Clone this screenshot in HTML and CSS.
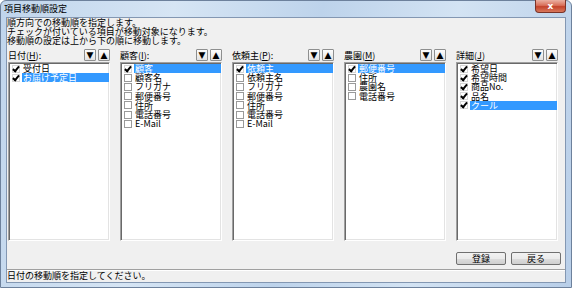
FILE: index.html
```html
<!DOCTYPE html>
<html lang="ja">
<head>
    <meta charset="UTF-8">
    <title>項目移動順設定</title>
    <link rel="stylesheet" href="styles.css">
</head>
<body>
<div class="window">
    <div class="titlebar">
        <span class="title">項目移動順設定</span>
        <span class="close">x</span>
    </div>
    <div class="client">
        <div class="intro">
            順方向での移動順を指定します。<br>
            チェックが付いている項目が移動対象になります。<br>
            移動順の設定は上から下の順に移動します。
        </div>

        <div class="columns">
            <div class="col">
                <div class="col-head">
                    <span class="label">日付(<u>H</u>):</span>
                    <span class="arrow">▼</span><span class="arrow">▲</span>
                </div>
                <ul class="list">
                    <li><span class="chk on"></span><span class="txt">受付日</span></li>
                    <li class="sel"><span class="chk on"></span><span class="txt">お届け予定日</span></li>
                </ul>
            </div>
            <div class="col">
                <div class="col-head">
                    <span class="label">顧客(<u>I</u>):</span>
                    <span class="arrow">▼</span><span class="arrow">▲</span>
                </div>
                <ul class="list">
                    <li class="sel"><span class="chk on"></span><span class="txt">顧客</span></li>
                    <li><span class="chk"></span><span class="txt">顧客名</span></li>
                    <li><span class="chk"></span><span class="txt">フリガナ</span></li>
                    <li><span class="chk"></span><span class="txt">郵便番号</span></li>
                    <li><span class="chk"></span><span class="txt">住所</span></li>
                    <li><span class="chk"></span><span class="txt">電話番号</span></li>
                    <li><span class="chk"></span><span class="txt">E-Mail</span></li>
                </ul>
            </div>
            <div class="col">
                <div class="col-head">
                    <span class="label">依頼主(<u>P</u>):</span>
                    <span class="arrow">▼</span><span class="arrow">▲</span>
                </div>
                <ul class="list">
                    <li class="sel"><span class="chk on"></span><span class="txt">依頼主</span></li>
                    <li><span class="chk"></span><span class="txt">依頼主名</span></li>
                    <li><span class="chk"></span><span class="txt">フリガナ</span></li>
                    <li><span class="chk"></span><span class="txt">郵便番号</span></li>
                    <li><span class="chk"></span><span class="txt">住所</span></li>
                    <li><span class="chk"></span><span class="txt">電話番号</span></li>
                    <li><span class="chk"></span><span class="txt">E-Mail</span></li>
                </ul>
            </div>
            <div class="col">
                <div class="col-head">
                    <span class="label">農園(<u>M</u>)</span>
                    <span class="arrow">▼</span><span class="arrow">▲</span>
                </div>
                <ul class="list">
                    <li class="sel"><span class="chk on"></span><span class="txt">郵便番号</span></li>
                    <li><span class="chk"></span><span class="txt">住所</span></li>
                    <li><span class="chk"></span><span class="txt">農園名</span></li>
                    <li><span class="chk"></span><span class="txt">電話番号</span></li>
                </ul>
            </div>
            <div class="col">
                <div class="col-head">
                    <span class="label">詳細(<u>J</u>)</span>
                    <span class="arrow">▼</span><span class="arrow">▲</span>
                </div>
                <ul class="list">
                    <li><span class="chk on"></span><span class="txt">希望日</span></li>
                    <li><span class="chk on"></span><span class="txt">希望時間</span></li>
                    <li><span class="chk on"></span><span class="txt">商品No.</span></li>
                    <li><span class="chk on"></span><span class="txt">品名</span></li>
                    <li class="sel"><span class="chk on"></span><span class="txt">クール</span></li>
                </ul>
            </div>
        </div>

        <div class="buttons">
            <button class="btn">登録</button>
            <button class="btn">戻る</button>
        </div>

        <div class="status">日付の移動順を指定してください。</div>
    </div>
</div>
</body>
</html>
```

FILE: styles.css
```css
html, body {
    margin: 0;
    padding: 0;
}
body {
    width: 572px;
    height: 288px;
    overflow: hidden;
    font-family: "Noto Sans CJK JP", "DejaVu Sans", sans-serif;
    font-size: 9px;
    color: #000;
}
.window {
    width: 572px;
    height: 288px;
    box-sizing: border-box;
    display: flex;
    flex-direction: column;
    background: linear-gradient(100deg, #c0d5ec 0%, #d6e5f4 28%, #bdd3eb 52%, #d3e3f3 74%, #b8cee8 100%);
    border: 1px solid #6d819c;
    border-radius: 6px 6px 0 0;
}
.titlebar {
    height: 16px;
    display: flex;
    justify-content: space-between;
    padding-left: 3px;
}
.title {
    line-height: 16px;
}
.close {
    width: 31px;
    height: 13px;
    margin-right: 5px;
    margin-top: -1px;
    box-sizing: border-box;
    border: 1px solid #7a3328;
    border-top: none;
    border-radius: 0 0 4px 4px;
    background: linear-gradient(#eab0a2 0%, #d9705a 45%, #c4432b 55%, #d8785c 100%);
    color: #fff;
    font-family: "DejaVu Sans", sans-serif;
    font-weight: bold;
    font-size: 9px;
    line-height: 12px;
    text-align: center;
}
.client {
    margin: 0 5px 4px 5px;
    height: 264px;
    background: #f0f0f0;
    border: 1px solid #8397b2;
    display: flex;
    flex-direction: column;
}
.intro {
    line-height: 9px;
    height: 27px;
}
.columns {
    display: grid;
    grid-template-columns: repeat(5, 102px);
    column-gap: 10px;
    margin: 3px 0 0 1px;
}
.col-head {
    height: 14px;
    display: flex;
    align-items: center;
}
.label {
    flex: 1;
    line-height: 11px;
}
.arrow {
    width: 12px;
    height: 12px;
    box-sizing: border-box;
    margin-left: 2px;
    border: 1px solid #8e8f8f;
    border-radius: 1px;
    background: linear-gradient(#fdfdfd, #e2e2e2);
    font-family: "DejaVu Sans", sans-serif;
    font-size: 9px;
    line-height: 10px;
    text-align: center;
}
.list {
    list-style: none;
    margin: 0;
    padding: 1px 0 0 1px;
    height: 179px;
    box-sizing: border-box;
    background: #fff;
    border: 1px solid #fff;
    border-top-color: #a0a0a0;
    border-left-color: #a0a0a0;
    box-shadow: inset 1px 1px 0 #696969, inset -1px -1px 0 #e3e3e3;
}
.list li {
    display: flex;
    align-items: center;
    height: 9.2px;
    line-height: 9px;
}
.chk {
    width: 6px;
    height: 6px;
    margin: 0 2px 0 2px;
    border: 1px solid #9a9a9a;
    background: #fff;
    position: relative;
}
.chk.on {
    border-color: #d6d6d6;
}
.chk.on::after {
    content: "";
    position: absolute;
    left: 1px;
    top: -1px;
    width: 2px;
    height: 5px;
    border: solid #000;
    border-width: 0 2px 2px 0;
    transform: rotate(40deg);
}
.txt {
    flex: 1;
    height: 9.2px;
    padding-left: 1px;
}
.sel .txt {
    background: #3399ff;
    color: #fff;
}
.buttons {
    display: flex;
    justify-content: flex-end;
    gap: 5px;
    margin-top: 11px;
    padding-right: 4px;
    height: 13px;
}
.btn {
    width: 50px;
    height: 13px;
    padding: 0;
    font-family: "Noto Sans CJK JP", sans-serif;
    font-size: 9px;
    line-height: 11px;
    color: #000;
    border: 1px solid #707070;
    border-radius: 2px;
    background: linear-gradient(#f2f2f2 0%, #ebebeb 50%, #dddddd 51%, #cfcfcf 100%);
}
.status {
    margin-top: 4px;
    border-top: 1px solid #a0a0a0;
    box-shadow: inset 0 1px 0 #fff;
    height: 12px;
    line-height: 12px;
}
```
